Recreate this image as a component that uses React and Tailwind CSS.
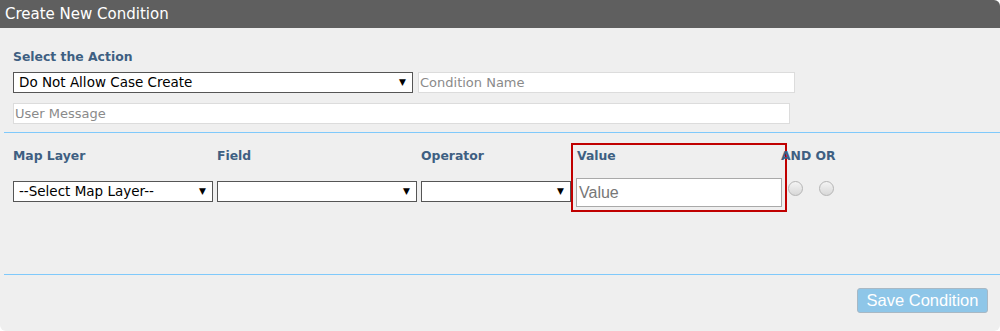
import React from "react";

const Sel = ({ w, text }) => (
  <div
    className={`${w} h-[21px] bg-white border border-[#555] flex items-center justify-between pl-[5px] pr-[6px] text-[13.5px] text-black leading-none`}
  >
    <span>{text}</span>
    <span className="text-[9px] text-black">▼</span>
  </div>
);

const Radio = () => (
  <div className="w-[15px] h-[15px] rounded-full border border-[#b5b5b5] bg-gradient-to-b from-[#f4f4f4] to-[#d8d8d8]" />
);

const Label = ({ children, className = "" }) => (
  <div className={`text-[12.4px] font-bold text-[#3e5f82] leading-[15px] whitespace-nowrap ${className}`}>
    {children}
  </div>
);

const SelCol = ({ w, sw, label, text }) => (
  <div className={`${w} flex flex-col pt-[5px]`}>
    <Label>{label}</Label>
    <div className="mt-[18px]">
      <Sel w={sw} text={text} />
    </div>
  </div>
);

export default function App() {
  return (
    <div
      className="w-[1000px] h-[331px] bg-white"
      style={{ fontFamily: '"DejaVu Sans", Verdana, sans-serif' }}
    >
      <div className="h-[28px] bg-[#5f5f5f] rounded-tr-[6px] text-white text-[15px] leading-[28px] pl-[5px]">
        Create New Condition
      </div>
      <div className="h-[303px] bg-[#efefef] rounded-b-[6px] flex flex-col">
        <Label className="pl-[13px] pt-[21px]">Select the Action</Label>
        <div className="pl-[13px] mt-[8px] flex gap-[5px]">
          <Sel w="w-[400px]" text="Do Not Allow Case Create" />
          <div className="w-[377px] h-[21px] bg-white border border-[#dcdcdc] flex items-center pl-[1px] text-[13px] text-[#8a8a8a] leading-none">
            Condition Name
          </div>
        </div>
        <div className="pl-[13px] mt-[10px]">
          <div className="w-[777px] h-[21px] bg-white border border-[#dcdcdc] flex items-center pl-[1px] text-[13px] text-[#8a8a8a] leading-none">
            User Message
          </div>
        </div>
        <div className="ml-[4px] mt-[8px] h-[1px] bg-[#7fc9fb]" />
        <div className="pl-[13px] mt-[10px] flex items-start">
          <SelCol w="w-[204px]" sw="w-[200px]" label="Map Layer" text="--Select Map Layer--" />
          <SelCol w="w-[204px]" sw="w-[200px]" label="Field" text="" />
          <SelCol w="w-[150px]" sw="w-[150px]" label="Operator" text="" />
          <div className="w-[216px] h-[69px] border-2 border-[#c00000] flex flex-col pl-[3px] pt-[3px]">
            <Label className="pl-[1px]">Value</Label>
            <div
              className="mt-[15px] w-[206px] h-[29px] bg-white border border-[#a9a9a9] flex items-center pl-[2px] text-[16px] text-[#777] leading-none"
              style={{ fontFamily: '"Liberation Sans", Arial, sans-serif' }}
            >
              Value
            </div>
          </div>
          <div className="flex flex-col -ml-[6px] pt-[5px]">
            <Label>AND OR</Label>
            <div className="flex gap-[16px] mt-[18px] pl-[7px]">
              <Radio />
              <Radio />
            </div>
          </div>
        </div>
        <div className="ml-[4px] mt-[62px] h-[1px] bg-[#7fc9fb]" />
        <div className="flex justify-end pr-[12px] mt-[13px]">
          <div
            className="w-[131px] h-[25px] bg-[#8ec6e8] border border-[#a8b8c4] rounded-[3px] text-white text-[16.5px] flex items-center justify-center leading-none"
            style={{ fontFamily: '"Liberation Sans", Arial, sans-serif' }}
          >
            Save Condition
          </div>
        </div>
      </div>
    </div>
  );
}
